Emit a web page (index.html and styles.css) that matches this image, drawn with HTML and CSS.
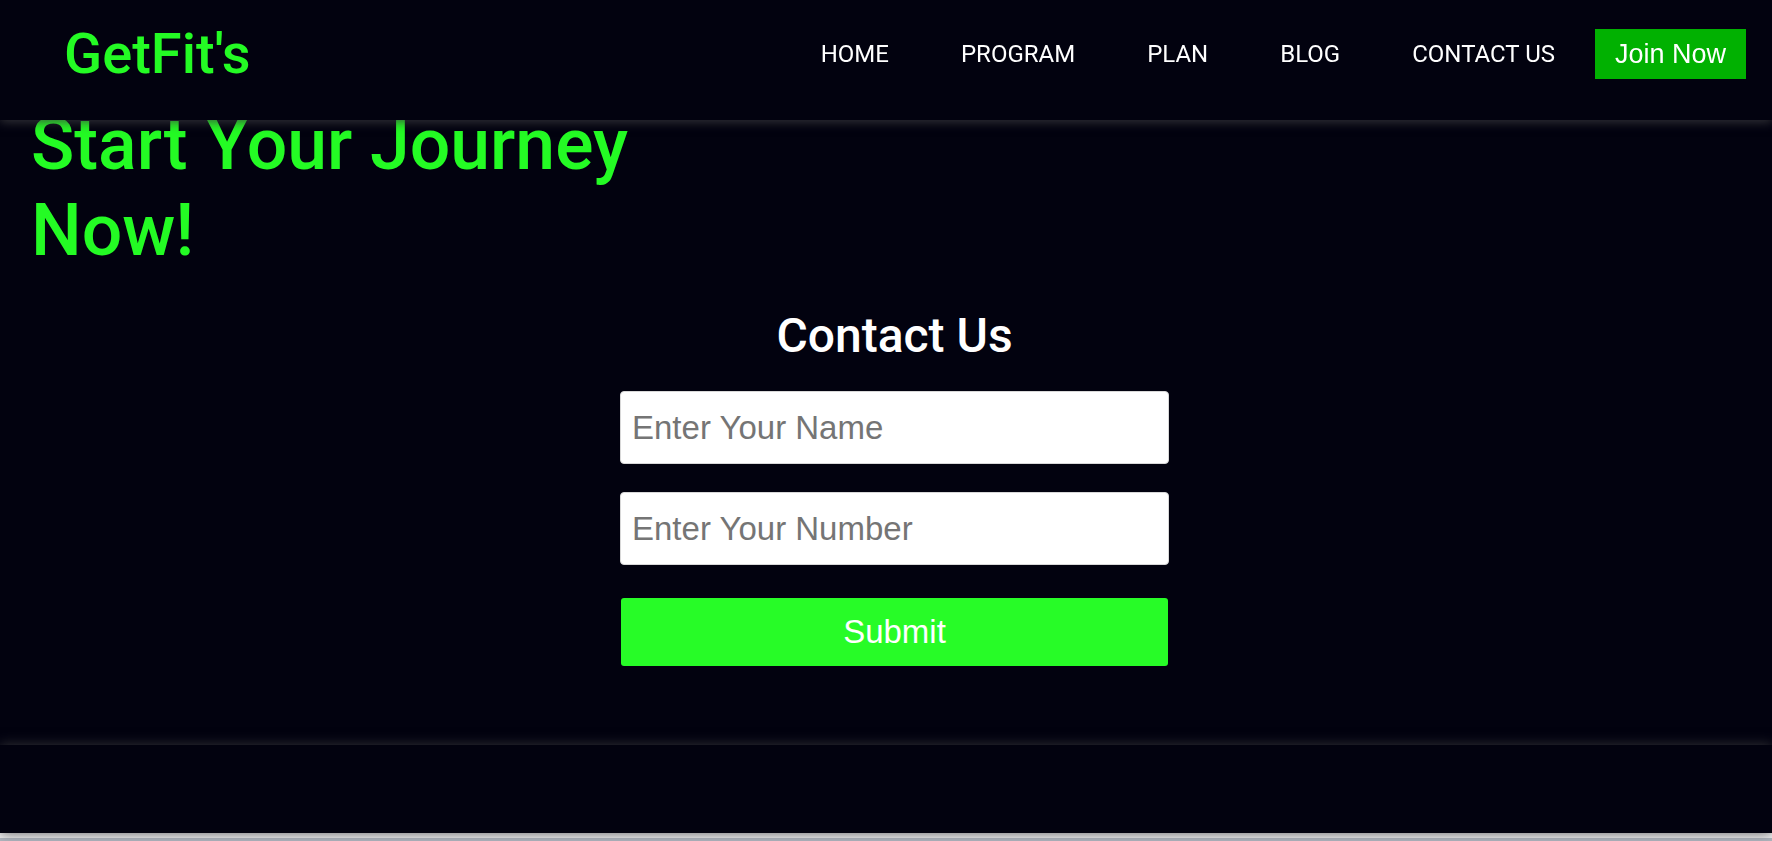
FILE: index.html
```html
<!DOCTYPE html>
<html lang="en">
<head>
<meta charset="utf-8">
<title>GetFit's</title>
<link rel="stylesheet" href="styles.css">
</head>
<body>
<header class="topbar">
  <div class="logo">GetFit's</div>
  <nav class="nav">
    <div class="nav-links">
      <a class="nav-link" href="#">HOME</a>
      <a class="nav-link" href="#">PROGRAM</a>
      <a class="nav-link" href="#">PLAN</a>
      <a class="nav-link" href="#">BLOG</a>
      <a class="nav-link" href="#">CONTACT US</a>
    </div>
    <a class="join-btn" href="#">Join Now</a>
  </nav>
</header>
<main class="page">
  <h1 class="hero-title">Start Your Journey<br>Now!</h1>
  <section class="contact">
    <h2 class="contact-title">Contact Us</h2>
    <form class="contact-form">
      <input class="field" type="text" placeholder="Enter Your Name">
      <input class="field" type="text" placeholder="Enter Your Number">
      <button class="submit-btn" type="button">Submit</button>
    </form>
  </section>
</main>
<footer class="footer"></footer>
<div class="bottom-strip"></div>
</body>
</html>
```
FILE: styles.css
```css
html, body {
  margin: 0;
  padding: 0;
}
body {
  background: #02020f;
  font-family: Roboto, "Liberation Sans", sans-serif;
}
.topbar {
  position: fixed;
  top: 0;
  left: 0;
  right: 0;
  z-index: 10;
  height: 120px;
  box-sizing: border-box;
  padding: 0 26px 12px 64px;
  display: flex;
  align-items: center;
  justify-content: space-between;
  background: #02020f;
  box-shadow: 0 2px 10px rgba(60, 60, 64, 0.85);
}
.logo {
  font-family: Roboto, sans-serif;
  font-weight: 500;
  font-size: 56px;
  color: #24fb24;
  line-height: 1;
}
.nav {
  display: flex;
  align-items: center;
}
.nav-links {
  display: flex;
  align-items: center;
  gap: 72px;
}
.nav-link {
  font-family: Roboto, sans-serif;
  font-size: 24px;
  color: #ffffff;
  text-decoration: none;
}
.join-btn {
  margin-left: 40px;
  height: 50px;
  padding: 0 20px;
  display: flex;
  align-items: center;
  background: #01b101;
  color: #ffffff;
  font-family: "Liberation Sans", Arial, sans-serif;
  font-size: 27px;
  text-decoration: none;
}
.page {
  padding: 102px 0 79px 31px;
}
.hero-title {
  margin: 0;
  font-family: Roboto, sans-serif;
  font-weight: 500;
  font-size: 71.5px;
  line-height: 86px;
  color: #24fb24;
}
.contact {
  margin-top: 33px;
  margin-left: -14px;
  display: flex;
  flex-direction: column;
  align-items: center;
}
.contact-title {
  margin: 0;
  font-family: Roboto, sans-serif;
  font-weight: 500;
  font-size: 48px;
  line-height: normal;
  color: #ffffff;
}
.contact-form {
  margin-top: 27px;
  width: 549px;
  display: flex;
  flex-direction: column;
  gap: 28px;
}
.field {
  height: 73px;
  box-sizing: border-box;
  margin: 0;
  padding: 0 11px;
  border: 1px solid #d8d8d8;
  border-radius: 4px;
  background: #ffffff;
  font-family: "Liberation Sans", Arial, sans-serif;
  font-size: 33px;
  color: #222;
  outline: none;
}
.field::placeholder {
  color: #757575;
}
.submit-btn {
  margin-top: 5px;
  align-self: center;
  width: 547px;
  height: 68px;
  border: none;
  border-radius: 3px;
  background: #27fc27;
  color: #ffffff;
  font-family: "Liberation Sans", Arial, sans-serif;
  font-size: 33px;
  cursor: pointer;
}
.footer {
  height: 88px;
  background: #02020f;
  box-shadow: 0 0 12px rgba(60, 60, 64, 0.85);
  position: relative;
}
.bottom-strip {
  height: 8px;
  background: linear-gradient(#f1f1f1 0 5px, #b3b9c2 5px);
}
```
